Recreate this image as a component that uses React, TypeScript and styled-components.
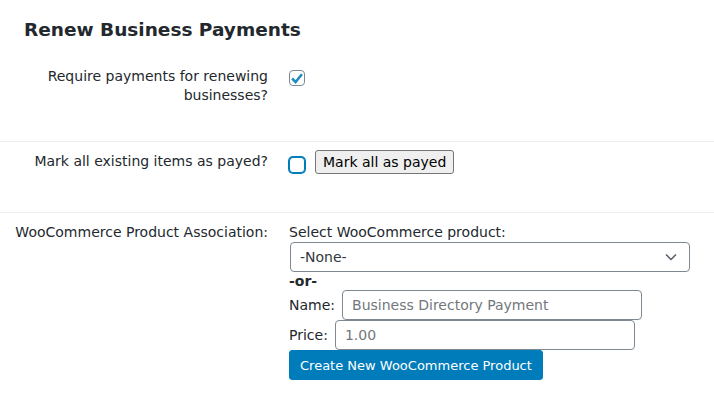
import styled, { createGlobalStyle } from "styled-components";

const GlobalStyle = createGlobalStyle`
  html, body {
    margin: 0;
    padding: 0;
    background: #fff;
  }
  body {
    font-family: "DejaVu Sans", Verdana, sans-serif;
    color: #23282d;
  }
`;

export const Page = styled.div`
  width: 714px;
  height: 404px;
  overflow: hidden;
  background: #fff;
`;

export const Title = styled.h2`
  margin: 0;
  padding: 18px 0 0 24px;
  font-size: 18.5px;
  line-height: 23px;
  font-weight: bold;
  color: #23282d;
`;

export const Row = styled.div<{ $pt: number; $pb: number; $last?: boolean }>`
  display: grid;
  grid-template-columns: 268px 1fr;
  column-gap: 21px;
  padding: ${(p) => p.$pt}px 0 ${(p) => p.$pb}px 0;
  border-bottom: ${(p) => (p.$last ? "none" : "1px solid #eeeeee")};
`;

export const Label = styled.div`
  text-align: right;
  font-size: 14px;
  line-height: 19px;
`;

export const Cell = styled.div`
  display: flex;
  align-items: flex-start;
  gap: 10px;
`;

export const Stack = styled.div`
  display: flex;
  flex-direction: column;
  align-items: flex-start;
  font-size: 14px;
`;

export const Box = styled.span<{ $focus?: boolean }>`
  box-sizing: border-box;
  width: 16px;
  height: 16px;
  border: 1px solid ${(p) => (p.$focus ? "#007cba" : "#7e8993")};
  border-radius: 4px;
  box-shadow: ${(p) => (p.$focus ? "0 0 0 1px #007cba" : "none")};
  display: flex;
  align-items: center;
  justify-content: center;
  background: #fff;
`;

export const GrayButton = styled.button`
  font-family: "DejaVu Sans", Verdana, sans-serif;
  font-size: 14px;
  color: #000;
  background: #efefef;
  border: 1px solid #767676;
  border-radius: 3px;
  height: 24px;
  padding: 0 7px;
`;

export const FieldLabel = styled.div`
  line-height: 19px;
`;

export const Or = styled.div`
  font-weight: bold;
  line-height: 18px;
`;

export const Select = styled.div`
  box-sizing: border-box;
  width: 400px;
  height: 30px;
  margin-left: 1px;
  border: 1px solid #7e8993;
  border-radius: 4px;
  display: flex;
  align-items: center;
  justify-content: space-between;
  padding: 0 12px 0 9px;
  color: #32373c;
`;

export const InputRow = styled.div`
  display: flex;
  align-items: center;
  gap: 7px;
  height: 30px;
`;

export const TextBox = styled.div`
  box-sizing: border-box;
  width: 300px;
  height: 30px;
  border: 1px solid #7e8993;
  border-radius: 4px;
  display: flex;
  align-items: center;
  padding: 0 9px;
  color: #72777c;
`;

export const BlueButton = styled.button`
  font-family: "DejaVu Sans", Verdana, sans-serif;
  font-size: 13px;
  color: #fff;
  background: #007cba;
  border: 1px solid #007cba;
  border-radius: 3px;
  height: 30px;
  padding: 0 10px;
`;

const Check = () => (
  <svg width="15" height="15" viewBox="0 0 20 20">
    <path d="M3 10 L8 15 L17 4" fill="none" stroke="#1e8cbe" strokeWidth="3.6" />
  </svg>
);

const Chevron = () => (
  <svg width="12" height="8" viewBox="0 0 12 8">
    <path d="M1 1.5 L6 6.5 L11 1.5" fill="none" stroke="#555d66" strokeWidth="1.5" />
  </svg>
);

const App = () => {
  return (
    <Page>
      <GlobalStyle />
      <Title>Renew Business Payments</Title>
      <Row $pt={26} $pb={36}>
        <Label>
          Require payments for renewing
          <br />
          businesses?
        </Label>
        <Cell style={{ paddingTop: 3 }}>
          <Box>
            <Check />
          </Box>
        </Cell>
      </Row>
      <Row $pt={8} $pb={38}>
        <Label style={{ paddingTop: 2 }}>Mark all existing items as payed?</Label>
        <Cell style={{ gap: 10 }}>
          <Box $focus style={{ marginTop: 7 }} />
          <GrayButton>Mark all as payed</GrayButton>
        </Cell>
      </Row>
      <Row $pt={10} $pb={20} $last>
        <Label>WooCommerce Product Association:</Label>
        <Stack>
          <FieldLabel>Select WooCommerce product:</FieldLabel>
          <Select>
            <span>-None-</span>
            <Chevron />
          </Select>
          <Or>-or-</Or>
          <InputRow>
            <span>Name:</span>
            <TextBox>Business Directory Payment</TextBox>
          </InputRow>
          <InputRow>
            <span>Price:</span>
            <TextBox>1.00</TextBox>
          </InputRow>
          <BlueButton>Create New WooCommerce Product</BlueButton>
        </Stack>
      </Row>
    </Page>
  );
};

export default App;
